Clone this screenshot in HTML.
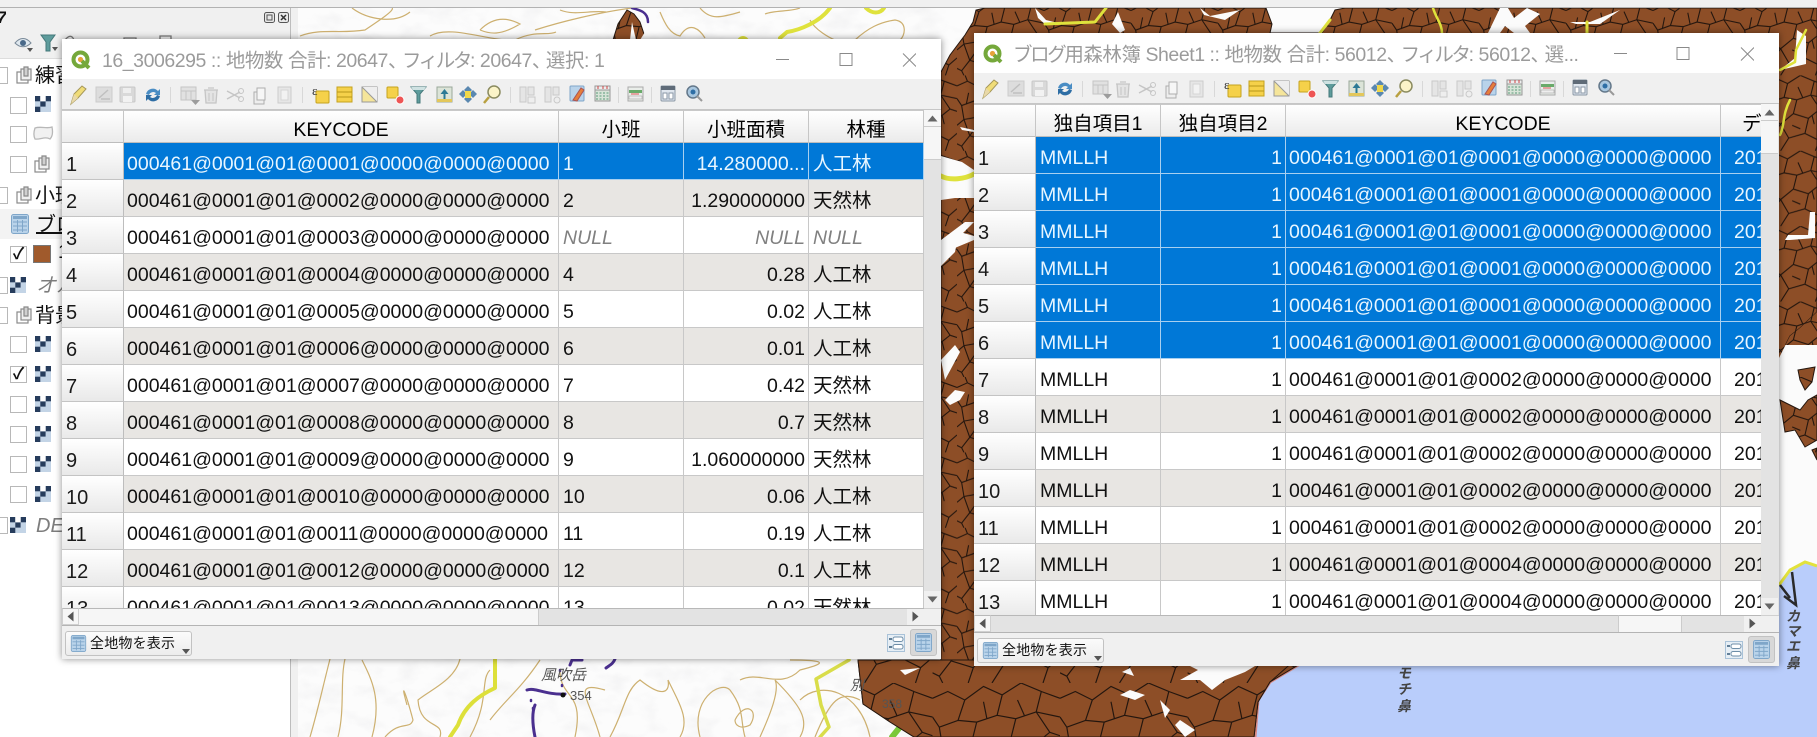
<!DOCTYPE html>
<html lang="ja"><head><meta charset="utf-8"><title>QGIS</title>
<style>
html,body{margin:0;padding:0;width:1817px;height:737px;overflow:hidden;background:#fff}
body{position:relative;font-family:"Liberation Sans","Noto Sans CJK JP",sans-serif;color:#111}
.abs,svg.abs{position:absolute;display:block}
.lbl{position:absolute;font-size:19.5px;line-height:24px;white-space:nowrap;overflow:hidden}
.win{position:absolute;background:#f0f0f0;box-sizing:border-box;box-shadow:0 0 7px rgba(0,0,0,.45);overflow:hidden}
.tt{position:absolute;left:0;top:0;right:0;height:40px;background:#fff}
.ttx{position:absolute;left:40px;top:9px;font-size:19.5px;line-height:26px;color:#9b9b9b;white-space:nowrap;letter-spacing:-.45px}
.ttx .k{letter-spacing:-2.4px}
.ttx .c{letter-spacing:-5.5px}
.tb{position:absolute;left:0;top:40px;right:0;height:31px;background:#f0f0f0}
.tv{position:absolute;left:0;top:71px;overflow:hidden;background:#e3e3e3}
table{border-collapse:separate;border-spacing:0;table-layout:fixed;font-size:19.5px}
th{font-weight:400;padding:6px 2px 0;line-height:24px;border-right:1px solid #c6c6c6;border-bottom:1px solid #bdbdbd;border-top:1px solid #c9c9c9;background:linear-gradient(#fff,#ebebeb);text-align:center;white-space:nowrap;overflow:hidden;box-sizing:border-box;height:33px;color:#000}
td{height:37px;box-sizing:border-box;padding:5px 4px 0 4px;border-right:1px solid #c8c8c8;border-bottom:1px solid #c8c8c8;white-space:nowrap;overflow:hidden;background:#fff;line-height:24px}
td.h{background:linear-gradient(#fff,#e9e9e9);padding:7px 0 0 4px;font-size:20px;line-height:24px;border-right:1px solid #bdbdbd;border-bottom:1px solid #c4c4c4;color:#1a1a1a}
tr.a td{background:#e8e6e3}
tr.a td.h{background:linear-gradient(#fff,#e9e9e9)}
tr.s td{background:#0078d7;color:#e8f6ff;border-right-color:#a8d0f0;border-bottom-color:#a8d0f0}
tr.s td.h{background:linear-gradient(#fff,#e9e9e9);color:#1a1a1a;border-right-color:#bdbdbd;border-bottom-color:#c4c4c4}
td.r{text-align:right;padding-right:3px}
td.n{font-style:italic;color:#808080}
td.d{padding-left:13px;padding-right:0;border-right:0}
.k1 td:nth-child(2),.k2 td:nth-child(4){padding-left:3px}
.vs,.hs{position:absolute;background:#e3e3e3}
.sb{position:absolute;background:#f6f6f6;box-sizing:border-box}
.bb{position:absolute;background:#f0f0f0;border-top:1px solid #b4b4b4;box-sizing:border-box;left:0;right:0}
.btn{position:absolute;left:3px;top:5px;width:127px;height:25px;border:1px solid #c2c2c2;border-radius:3px;box-sizing:border-box;background:linear-gradient(#fbfbfb,#ececec);font-size:14px;line-height:23px;white-space:nowrap}
.btn span{position:absolute;left:24px;top:0;letter-spacing:.2px;color:#111}
.ub{position:absolute;box-sizing:border-box}
.ck{position:absolute;width:17px;height:17px;box-sizing:border-box;border:1px solid #b8b8b8;background:#fff}
</style></head><body>

<svg width="0" height="0" style="position:absolute">
<defs>
<pattern id="f" width="150" height="130" patternUnits="userSpaceOnUse" patternTransform="scale(.58)">
<rect width="150" height="130" fill="#8d4e27"/>
<path d="M0 18L18 10 38 20 30 44 8 52 0 40M38 20L60 4 82 14 76 38 52 46 30 44M82 14L104 0 128 10 122 34 98 42 76 38M128 10L150 18M122 34L150 40M8 52L12 76 0 86M52 46L46 70 12 76M46 70L70 84 92 66 98 42M92 66L118 74 138 58 122 34M138 58L150 62M118 74L112 100 84 108 70 84M84 108L70 130M112 100L136 112 150 100M136 112L130 130M12 76L22 104 46 70M22 104L8 122 0 118M22 104L48 112 70 84M48 112L42 130M8 122L12 130M60 4L60 0M18 10L14 0M30 44L52 46M60 22L64 42M100 20L108 38M20 30L16 50M128 84L124 68M34 90L42 110M90 86L104 92" fill="none" stroke="#24160e" stroke-width="1.9"/>
</pattern>
<pattern id="g" width="150" height="130" patternUnits="userSpaceOnUse" patternTransform="translate(40 20) scale(.85)">
<rect width="150" height="130" fill="#8d4e27"/>
<path d="M0 18L18 10 38 20 30 44 8 52 0 40M38 20L60 4 82 14 76 38 52 46 30 44M82 14L104 0 128 10 122 34 98 42 76 38M128 10L150 18M122 34L150 40M8 52L12 76 0 86M52 46L46 70 12 76M46 70L70 84 92 66 98 42M92 66L118 74 138 58 122 34M138 58L150 62M118 74L112 100 84 108 70 84M84 108L70 130M112 100L136 112 150 100M136 112L130 130M12 76L22 104 46 70M22 104L8 122 0 118M22 104L48 112 70 84M48 112L42 130M8 122L12 130M30 44L52 46M60 22L64 42M100 20L108 38" fill="none" stroke="#24160e" stroke-width="1.4"/>
</pattern>
<filter id="hs" x="0" y="0" width="100%" height="100%"><feTurbulence type="fractalNoise" baseFrequency=".035 .06" numOctaves="3" seed="4"/><feColorMatrix values="0 0 0 0 .72  0 0 0 0 .72  0 0 0 0 .74  1.6 0 0 0 -.72"/></filter>

<g id="ras"><rect width="16" height="16" fill="#c3d4e6"/><rect width="5.3" height="5.3" fill="#263c5c"/><rect x="10.7" width="5.3" height="5.3" fill="#263c5c"/><rect x="5.3" y="5.3" width="5.3" height="5.3" fill="#263c5c"/><rect y="10.7" width="5.3" height="5.3" fill="#263c5c"/><rect x="5.3" width="5.3" height="5.3" fill="#fff"/></g>
<g id="grp" fill="#fff" stroke="#8a8a8a" stroke-width="1.2"><rect x="1" y="6" width="11" height="11"/><rect x="5" y="3" width="10" height="11" fill="#f0f0f0"/><path d="M8 1h4v9H8z" fill="#d0d0d0"/></g>
<g id="tbl"><rect x=".5" y=".5" width="17" height="19" rx="2" fill="#b9d3ea" stroke="#7fa6c9"/><rect x="2" y="2" width="14" height="3" fill="#7fa6c9"/><path d="M2 8h14M2 12h14M2 16h14M6.500 6v12M11.500 6v12" stroke="#7fa6c9" fill="none"/></g>
<g id="q"><circle cx="9.500" cy="9.500" r="7" fill="#fff" stroke="#75a83b" stroke-width="4"/><circle cx="9.500" cy="9.500" r="2.600" fill="#e6a33a"/><path d="M11 11l7 7" stroke="#75a83b" stroke-width="4"/></g>

<g id="toolbar">
<g transform="translate(7,13)"><path d="M2 19L5 9 13 1 17 4 9 13z" fill="#f0dc78" stroke="#a5975a"/><path d="M2 19l3-10 4 4z" fill="#e9d9a8"/></g>
<g transform="translate(34,15)" opacity=".55"><rect width="16" height="15" fill="#cfcfcf" stroke="#b0b0b0"/><path d="M3 11L12 3M5 12h9" stroke="#999" stroke-width="1.500"/></g>
<g transform="translate(58,15)" opacity=".55"><rect width="15" height="15" rx="1" fill="#c8c8c8" stroke="#a8a8a8"/><rect x="3" y="1" width="8" height="5" fill="#eee"/><rect x="3" y="9" width="9" height="6" fill="#f5f5f5"/></g>
<g transform="translate(83,15)"><path d="M1 7a7 7 0 0 1 12-3l2-2v6H9l2-2a4.500 4.500 0 0 0-7 2z" fill="#4a8dc4"/><path d="M15 9a7 7 0 0 1-12 3l-2 2V8h6l-2 2a4.500 4.500 0 0 0 7-2z" fill="#2e6ea5"/></g>
<rect x="108" y="15" width="1" height="16" fill="#d8d8d8"/>
<g transform="translate(119,15)" opacity=".6"><rect width="15" height="13" fill="#d8d8d8" stroke="#aaa"/><path d="M0 4h15M5 4v9M10 4v9" stroke="#aaa"/><path d="M10 13h9l-4.500 5z" fill="#666"/></g>
<g transform="translate(141,15)" opacity=".6"><path d="M2 3h12l-1 13H3zM1 3h14M5 1h6" fill="#ddd" stroke="#aaa" stroke-width="1.300"/><path d="M6 6v8M10 6v8" stroke="#aaa"/></g>
<g transform="translate(165,17)" opacity=".6"><path d="M0 2l13 7M0 10L13 3" stroke="#aaa" stroke-width="1.500"/><circle cx="14" cy="2" r="2.500" fill="none" stroke="#aaa"/><circle cx="14" cy="10" r="2.500" fill="none" stroke="#aaa"/></g>
<g transform="translate(192,15)" opacity=".75"><rect x="0" y="5" width="10" height="12" fill="#eee" stroke="#999"/><rect x="3" y="1" width="8" height="12" fill="#f8f8f8" stroke="#999"/></g>
<g transform="translate(216,15)" opacity=".5"><rect width="13" height="16" fill="#ddd" stroke="#aaa"/><rect x="3" y="3" width="7" height="10" fill="#f5f5f5" stroke="#bbb"/></g>
<rect x="240" y="15" width="1" height="16" fill="#d8d8d8"/>
<g transform="translate(250,13)"><rect x="4" y="6" width="13" height="12" rx="1" fill="#f5d14a" stroke="#c5a21e"/><text x="0" y="10" font-size="13" font-family="Liberation Serif,serif" fill="#333">ε</text></g>
<g transform="translate(275,15)"><rect width="15" height="15" fill="#f5d14a" stroke="#c5a21e"/><path d="M0 5h15M0 10h15" stroke="#b8961a"/></g>
<g transform="translate(300,15)"><rect width="15" height="15" fill="#f5e59a" stroke="#999"/><path d="M0 0L15 15V0z" fill="#eee"/><path d="M0 0L15 15" stroke="#999"/></g>
<g transform="translate(325,15)"><rect width="11" height="11" rx="1" fill="#f5d14a" stroke="#c5a21e"/><circle cx="13" cy="13" r="4" fill="#e55" stroke="#fff"/></g>
<g transform="translate(349,14)"><path d="M0 1h15L9 8v9H6V8z" fill="#5e9c9c" stroke="#44787a"/><path d="M0 1h15l-2 3H2z" fill="#cfe2e2"/></g>
<g transform="translate(375,15)"><rect width="15" height="15" fill="#dce4d8" stroke="#9aa89a"/><path d="M7.500 2l4 5h-8z" fill="#2c7a95"/><path d="M7.500 6v6" stroke="#2c7a95" stroke-width="2"/><rect y="12" width="15" height="3" fill="#e3c75b"/></g>
<g transform="translate(398,14)"><path d="M8 0l4 4-4 4-4-4zM8 9l4 4-4 4-4-4zM3 4l4 4-4 4-4-4zM13 4l4 4-4 4-4-4z" fill="#5a88b0"/><rect x="5" y="5" width="6" height="7" fill="#f0d84a"/></g>
<g transform="translate(421,13)"><circle cx="11" cy="7" r="6" fill="#fbf4c8" stroke="#8b8b60" stroke-width="1.500"/><path d="M6 12L1 18" stroke="#b8a040" stroke-width="2.500"/></g>
<rect x="448" y="15" width="1" height="16" fill="#d8d8d8"/>
<g transform="translate(458,15)" opacity=".55"><path d="M0 0h6v15H0zM8 0h6v8H8z" fill="#ddd" stroke="#aaa"/><rect x="8" y="10" width="7" height="6" fill="#eee" stroke="#aaa"/></g>
<g transform="translate(483,15)" opacity=".55"><path d="M0 0h6v15H0zM8 0h6v8H8z" fill="#ddd" stroke="#aaa"/><circle cx="12" cy="13" r="3" fill="#eee" stroke="#aaa"/></g>
<g transform="translate(508,14)"><rect width="14" height="15" rx="1" fill="#b9d3ea" stroke="#7fa6c9"/><path d="M3 14L11 2l3 2-7 11z" fill="#e67e3a" stroke="#a55"/></g>
<g transform="translate(533,14)"><rect width="15" height="15" fill="#d8e4d8" stroke="#999"/><rect width="15" height="4" fill="#eee" stroke="#999"/><path d="M1 7h13M1 10h13M1 13h13" stroke="#5a9a7a" stroke-dasharray="2 1.500"/><path d="M3 0v3M8 0v3M12 0v3" stroke="#c44"/></g>
<rect x="556" y="15" width="1" height="16" fill="#d8d8d8"/>
<g transform="translate(566,15)"><rect width="15" height="14" fill="#eaeeea" stroke="#aaa"/><rect x="1" y="3" width="13" height="3" fill="#6aaa6a"/><rect x="1" y="9" width="13" height="3" fill="#eee" stroke="#999" stroke-width=".5"/><path d="M3 7h8" stroke="#d55"/></g>
<rect x="589" y="15" width="1" height="16" fill="#d8d8d8"/>
<g transform="translate(599,14)"><rect width="14" height="15" rx="1" fill="#dfe6ee" stroke="#8a97a5"/><rect width="14" height="4" fill="#5f6b78"/><rect x="2" y="7" width="4" height="6" fill="#fff" stroke="#8a97a5"/><rect x="8" y="7" width="4" height="6" fill="#fff" stroke="#8a97a5"/></g>
<g transform="translate(624,13)"><circle cx="7" cy="7" r="6" fill="#a9c7df" stroke="#64788a" stroke-width="1.500"/><circle cx="7" cy="7" r="2.500" fill="#2e6ea5"/><path d="M11 11l5 5" stroke="#999" stroke-width="2"/></g>
</g>
</defs>
</svg>

<!-- app background -->
<div class="abs" style="left:0;top:0;width:1817px;height:7px;background:#f0f0f0"></div>
<div class="abs" style="left:0;top:7px;width:1817px;height:1px;background:#b2b2b2"></div>

<!-- MAP -->
<svg class="abs" style="left:298px;top:8px" width="1519" height="729" viewBox="298 8 1519 729">
<rect x="298" y="8" width="1519" height="729" fill="#fcfcfc"/>
<rect x="298" y="8" width="700" height="729" filter="url(#hs)" opacity=".4"/>
<g fill="none" stroke="#cdb070" stroke-width="1.200">
<path d="M300 36C320 28 340 34 365 30 380 20 395 10 392 8M352 8C368 20 395 24 410 12M430 36C450 24 490 42 515 40 535 30 548 36 556 32M480 30C492 18 505 16 520 24 500 36 490 34 480 30M632 8C600 12 560 22 535 30M660 12C665 24 670 34 680 36 690 20 700 30 705 38M560 10C575 16 590 10 606 12M700 8C710 20 720 18 740 12M765 14C775 10 790 12 800 8M855 40C868 28 880 22 895 20 908 22 905 36 900 40M810 20C815 30 830 38 835 40"/>
<path d="M310 737C318 710 322 690 330 659M338 737C345 710 340 680 345 659M372 737C382 700 372 680 362 660M385 737C400 720 410 730 413 720 405 690 400 680 407 705M440 737C445 720 420 730 418 700 430 690 455 680 460 659M470 737C490 700 480 680 490 670M490 720C505 700 520 690 540 660M575 737C585 690 560 700 560 670M600 737C590 700 570 680 605 690M610 737C625 710 625 690 640 680 665 700 670 690 668 680 680 705 690 720 680 737M700 737C690 700 720 680 730 690 745 710 740 720 745 737M760 737C770 715 780 690 775 680 800 705 810 720 800 737M740 680C760 670 780 690 800 670 820 665 835 660 790 660M735 720C745 700 760 710 750 725 740 730 735 725 735 720M800 700C820 680 860 690 870 737M815 737C830 700 840 690 860 700"/>
</g>
<g fill="none" stroke-linecap="round" stroke-linejoin="round">
<path d="M830 8C820 22 800 30 787 32L780 38" stroke="#dfe23c" stroke-width="4"/>
<path d="M866 8C872 14 880 14 884 8" stroke="#dfe23c" stroke-width="4"/>
<circle cx="743" cy="42" r="6" fill="#dfe23c"/>
<path d="M495 659V688C480 695 465 705 458 725L450 737" stroke="#dde03a" stroke-width="4"/>
<path d="M849 660L816 679 821 705 829 727 820 737" stroke="#d9dd4a" stroke-width="3.500"/>
<path d="M915 716L900 727 892 737" stroke="#7ac83a" stroke-width="6"/>
<path d="M632 8C640 10 648 12 648 22" stroke="#4a2f8f" stroke-width="2.500"/>
<path d="M527 690C535 687 545 695 565 694" stroke="#4a2f8f" stroke-width="3"/>
<path d="M535 737C532 722 532 712 535 705" stroke="#4a2f8f" stroke-width="3"/>
<path d="M570 665L572 660 582 660M606 668C610 665 613 664 615 659" stroke="#4a2f8f" stroke-width="3"/>
<path d="M531 700v1M533 708v1M560 670v1M562 685v1" stroke="#4a2f8f" stroke-width="2.500"/>
</g>
<path d="M1255 737L1258 700 1270 682 1300 664 1779 585 1790 570 1805 562 1817 566V737z" fill="#b9cdfb"/>
<path d="M1255 737L1258 700 1270 682 1300 664" fill="none" stroke="#d88a84" stroke-width="3"/>
<path d="M1779 585L1790 570 1805 562 1817 566" fill="none" stroke="#e2e23c" stroke-width="3"/>
<path d="M1780 585L1790 598M1792 572L1796 605 1784 596" fill="none" stroke="#2a2a2a" stroke-width="2.500"/>
<path fill="url(#f)" stroke="#24160e" d="M613 40L618 24 627 10 634 14 640 22 646 40z"/>
<path fill="url(#f)" stroke="#24160e" d="M941 72L950 55 965 35 973 22 976 10 985 8H1266L1272 24 1270 33H1322L1330 20 1335 10 1345 8H1817V312L1800 328 1790 336 1779 358 1700 600 1300 664 1270 682 1258 702 1254 737H914L890 722 863 704 858 660H941z"/>
<path fill="url(#g)" stroke="#24160e" d="M858 660H1295L1270 682 1258 702 1254 737H914L890 722 863 704z"/>
<g fill="#fbfbfb">
<path d="M648 40L650 24 640 40zM630 40L632 22 636 40z"/>
<path d="M941 156L962 162 974 170 974 178 941 178zM941 178H974V198L955 198 941 200z"/>
<path d="M974 222L958 238 955 252 941 266 941 240 965 222z"/>
<path d="M974 236L960 232 950 250 974 240z"/>
<path d="M960 127L974 130 974 132 962 130z"/>
<path d="M1035 8L1046 20 1062 24 1046 25 1038 18zM1118 12L1125 30 1120 33 1112 24zM1200 8L1210 16 1240 10 1225 20 1204 15z"/>
<path d="M1488 33L1500 8 1508 8 1514 18 1527 8 1540 14 1525 26 1530 33 1514 33 1505 26 1500 33zM1570 22L1590 22 1620 10 1600 24 1576 24z"/>
<path d="M1797 30L1806 36 1806 64 1780 70 1795 58z"/>
<path d="M1785 240L1788 235 1808 235 1810 212 1815 212V238L1790 240z"/>
<path d="M1200 680L1212 690 1225 680 1245 672 1255 666H1190L1198 670 1180 680z"/>
<path d="M1122 672L1134 676 1130 668zM1120 695L1135 700 1145 695 1130 690zM1160 700L1170 710 1165 718zM1180 720L1195 730 1185 737 1175 725z"/>
<path d="M900 670L920 668 905 675z"/>
<path d="M941 360L955 345 960 352 945 380zM945 400L955 390 965 392 960 400 950 405z"/>
</g>
<g fill="none" stroke-linecap="round" stroke-linejoin="round" stroke="#dfe23c">
<path d="M1106 8L1095 22 1045 24" stroke-width="3"/>
<path d="M1330 20L1320 33" stroke-width="3"/>
<path d="M1433 8C1436 18 1442 24 1442 33" stroke-width="2.500"/>
<path d="M1587 22V33" stroke-width="3"/>
<path d="M1806 30L1796 50 1795 62 1780 70" stroke-width="2.500"/>
<path d="M1790 100C1782 115 1785 125 1780 135" stroke-width="2.500"/>
<path d="M941 176C950 181 965 179 974 174" stroke-width="5"/>
</g>
<path d="M1779 345H1817V560H1779z" fill="#fbfbfb"/>
<path d="M1779 358L1790 336 1800 328 1817 312V345H1779z" fill="url(#f)"/>
<g fill="url(#f)" stroke="#24160e">
<path d="M1798 370L1815 367 1812 382 1805 390 1800 380z"/>
<path d="M1780 400L1790 405 1800 410 1808 400 1817 395V440L1805 447 1795 430 1785 432z"/>
<path d="M1812 450L1817 448V460z"/>
</g>
<g font-family="'Liberation Sans','Noto Sans CJK JP',sans-serif" fill="#555">
<text x="541" y="680" font-size="15" font-style="italic">風吹岳</text>
<circle cx="563" cy="695" r="2.500" fill="#111"/>
<text x="570" y="700" font-size="13">354</text>
<text x="850" y="690" font-size="14" font-style="italic">別</text>
<text x="882" y="708" font-size="12">358</text>
</g>
<g font-family="'Liberation Sans','Noto Sans CJK JP',sans-serif" fill="#444" font-style="italic" font-size="14" font-weight="700">
<text x="1397" y="678">モ</text><text x="1397" y="694">チ</text><text x="1397" y="711">鼻</text>
<text x="1786" y="621">カ</text><text x="1786" y="636">マ</text><text x="1786" y="651">エ</text><text x="1786" y="668">鼻</text>
</g>
</svg>

<!-- LEFT PANEL -->
<div class="abs" style="left:0;top:8px;width:290px;height:729px;background:#fff"></div>
<div class="abs" style="left:0;top:8px;width:290px;height:50px;background:#f0f0f0;border-bottom:1px solid #ddd"></div>
<div class="abs" style="left:290px;top:8px;width:8px;height:729px;background:#f0f0f0;border-left:1px solid #bdbdbd;box-sizing:border-box"></div>
<div class="lbl" style="left:-3px;top:6px;font-style:italic;font-weight:700;font-size:17px">7</div>
<svg class="abs" style="left:264px;top:12px" width="26" height="12"><rect x=".5" y=".5" width="10" height="10" rx="2" fill="#e8e8e8" stroke="#555"/><rect x="3" y="3" width="5" height="5" fill="none" stroke="#555"/><rect x="14.500" y=".5" width="10" height="10" rx="2" fill="#e8e8e8" stroke="#555"/><path d="M17 3l5 5M22 3l-5 5" stroke="#333" stroke-width="1.500"/></svg>
<svg class="abs" style="left:14px;top:33px" width="160" height="25">
<path d="M1 10C6 4 12 4 17 10 12 15 6 15 1 10z" fill="#dfe8ef" stroke="#7a8a99"/><circle cx="9" cy="10" r="3" fill="#4a6a8a"/><path d="M13 15h6l-3 4z" fill="#555"/>
<path d="M27 2h14l-5 7v9h-4V9z" fill="#5e9c9c" stroke="#44787a"/><path d="M38 14h6l-3 4z" fill="#555"/>
<path d="M51 7C55 2 58 2 60 7M110 5h12v5h-12zM146 3h11v6h-11z" fill="none" stroke="#777" stroke-width="1.300"/>
</svg>
<div class="ck" style="left:-9px;top:67px"></div>
<svg class="abs" style="left:16px;top:66px" width="16" height="18"><use href="#grp"/></svg>
<div class="lbl" style="left:35px;top:64px;width:27px;font-size:20px">練習</div>
<div class="ck" style="left:10px;top:97px"></div>
<svg class="abs" style="left:35px;top:96px" width="17" height="17"><use href="#ras"/></svg>
<div class="ck" style="left:10px;top:126px"></div>
<svg class="abs" style="left:33px;top:126px" width="21" height="15"><path d="M2 2C8 0 14 3 19 1 20 6 20 10 17 13 12 10 7 14 2 13 0 9 1 5 2 2z" fill="#f1f1f1" stroke="#b8b8b8" stroke-width="1.300"/></svg>
<div class="ck" style="left:10px;top:156px"></div>
<svg class="abs" style="left:34px;top:155px" width="16" height="18"><use href="#grp"/></svg>
<div class="ck" style="left:-9px;top:187px"></div>
<svg class="abs" style="left:16px;top:186px" width="16" height="18"><use href="#grp"/></svg>
<div class="lbl" style="left:35px;top:184px;width:27px;font-size:20px">小班</div>
<div class="abs" style="left:0;top:209px;width:62px;height:30px;background:#f3f3f3"></div>
<svg class="abs" style="left:11px;top:214px" width="18" height="20"><use href="#tbl"/></svg>
<div class="lbl" style="left:36px;top:213px;width:26px;font-size:20px;text-decoration:underline">ブロ</div>
<div class="ck" style="left:10px;top:246px;font-size:16px;line-height:15px;font-weight:700;text-align:center;color:#111">✓</div>
<div class="abs" style="left:33px;top:245px;width:18px;height:18px;background:#a05a2c;border:1px solid #777;box-sizing:border-box"></div>
<div class="lbl" style="left:58px;top:240px;width:4px">1</div>
<div class="ck" style="left:-9px;top:277px"></div>
<svg class="abs" style="left:10px;top:277px" width="17" height="17"><use href="#ras"/></svg>
<div class="lbl" style="left:36px;top:274px;width:26px;font-style:italic;color:#7d7d7d;font-size:20px">オル</div>
<div class="ck" style="left:-9px;top:307px"></div>
<svg class="abs" style="left:16px;top:306px" width="16" height="18"><use href="#grp"/></svg>
<div class="lbl" style="left:35px;top:304px;width:27px;font-size:20px">背景</div>
<div class="ck" style="left:10px;top:336px"></div><svg class="abs" style="left:35px;top:336px" width="17" height="17"><use href="#ras"/></svg>
<div class="ck" style="left:10px;top:366px;font-size:16px;line-height:15px;font-weight:700;text-align:center;color:#111">✓</div><svg class="abs" style="left:35px;top:366px" width="17" height="17"><use href="#ras"/></svg>
<div class="ck" style="left:10px;top:396px"></div><svg class="abs" style="left:35px;top:396px" width="17" height="17"><use href="#ras"/></svg>
<div class="ck" style="left:10px;top:426px"></div><svg class="abs" style="left:35px;top:426px" width="17" height="17"><use href="#ras"/></svg>
<div class="ck" style="left:10px;top:456px"></div><svg class="abs" style="left:35px;top:456px" width="17" height="17"><use href="#ras"/></svg>
<div class="ck" style="left:10px;top:486px"></div><svg class="abs" style="left:35px;top:486px" width="17" height="17"><use href="#ras"/></svg>
<div class="ck" style="left:-9px;top:517px"></div>
<svg class="abs" style="left:10px;top:517px" width="17" height="17"><use href="#ras"/></svg>
<div class="lbl" style="left:36px;top:514px;width:26px;font-style:italic;color:#7d7d7d;font-size:20px">DEM</div>

<!-- WINDOW 1 -->
<div class="win" style="left:62px;top:39px;width:879px;height:620px">
<div class="tt"></div>
<svg class="abs" style="left:9px;top:11px" width="21" height="21"><use href="#q"/></svg>
<div class="ttx">16_3006295 :: 地物数 合計: 20647<span class="c">、</span><span class="k">フィルタ</span>: 20647<span class="c">、</span>選択: 1</div>
<svg class="abs" style="left:714px;top:14px" width="140" height="14"><path d="M0 6.500H13M64 .5h12v12H64zM127 .5l13 13M140 .5l-13 13" fill="none" stroke="#8a8a8a"/></svg>
<div class="tb"></div>
<svg class="abs" style="left:0;top:40px" width="720" height="31" viewBox="0 7 720 31"><use href="#toolbar"/></svg>
<div class="abs" style="left:0;top:70px;width:879px;height:1px;background:#c6c6c6"></div>
<div class="tv" style="width:862px;height:498px">
<table class="k1" style="width:862px"><colgroup><col style="width:62px"><col style="width:435px"><col style="width:125px"><col style="width:125px"><col style="width:115px"></colgroup>
<tr><th></th><th>KEYCODE</th><th>小班</th><th>小班面積</th><th>林種</th></tr>
<tr class="s"><td class="h">1</td><td>000461@0001@01@0001@0000@0000@0000</td><td>1</td><td class="r">14.280000...</td><td>人工林</td></tr>
<tr class="a"><td class="h">2</td><td>000461@0001@01@0002@0000@0000@0000</td><td>2</td><td class="r">1.290000000</td><td>天然林</td></tr>
<tr><td class="h">3</td><td>000461@0001@01@0003@0000@0000@0000</td><td class="n">NULL</td><td class="r n">NULL</td><td class="n">NULL</td></tr>
<tr class="a"><td class="h">4</td><td>000461@0001@01@0004@0000@0000@0000</td><td>4</td><td class="r">0.28</td><td>人工林</td></tr>
<tr><td class="h">5</td><td>000461@0001@01@0005@0000@0000@0000</td><td>5</td><td class="r">0.02</td><td>人工林</td></tr>
<tr class="a"><td class="h">6</td><td>000461@0001@01@0006@0000@0000@0000</td><td>6</td><td class="r">0.01</td><td>人工林</td></tr>
<tr><td class="h">7</td><td>000461@0001@01@0007@0000@0000@0000</td><td>7</td><td class="r">0.42</td><td>天然林</td></tr>
<tr class="a"><td class="h">8</td><td>000461@0001@01@0008@0000@0000@0000</td><td>8</td><td class="r">0.7</td><td>天然林</td></tr>
<tr><td class="h">9</td><td>000461@0001@01@0009@0000@0000@0000</td><td>9</td><td class="r">1.060000000</td><td>天然林</td></tr>
<tr class="a"><td class="h">10</td><td>000461@0001@01@0010@0000@0000@0000</td><td>10</td><td class="r">0.06</td><td>人工林</td></tr>
<tr><td class="h">11</td><td>000461@0001@01@0011@0000@0000@0000</td><td>11</td><td class="r">0.19</td><td>人工林</td></tr>
<tr class="a"><td class="h">12</td><td>000461@0001@01@0012@0000@0000@0000</td><td>12</td><td class="r">0.1</td><td>人工林</td></tr>
<tr><td class="h">13</td><td>000461@0001@01@0013@0000@0000@0000</td><td>13</td><td class="r">0.02</td><td>天然林</td></tr>
</table></div>
<div class="vs" style="left:862px;top:71px;width:17px;height:498px"></div>
<div class="sb" style="left:862px;top:71px;width:17px;height:17px;border-bottom:1px solid #ccc"></div>
<svg class="abs" style="left:865px;top:76px" width="11" height="7"><path d="M.5 6.500L5.500 .5 10.500 6.500z" fill="#666"/></svg>
<div class="sb" style="left:862px;top:88px;width:17px;height:33px;border-bottom:1px solid #ccc"></div>
<div class="sb" style="left:862px;top:552px;width:17px;height:17px;background:#f0f0f0"></div>
<svg class="abs" style="left:865px;top:557px" width="11" height="7"><path d="M.5 .5L5.500 6.500 10.500 .5z" fill="#666"/></svg>
<div class="hs" style="left:0;top:569px;width:862px;height:17px;border-top:1px solid #b8b8b8;box-sizing:border-box"></div>
<div class="sb" style="left:0;top:569px;width:17px;height:17px;border:1px solid #d0d0d0;border-top-color:#b8b8b8"></div>
<svg class="abs" style="left:5px;top:572px" width="7" height="11"><path d="M6.500 .5L.5 5.500 6.500 10.500z" fill="#555"/></svg>
<div class="sb" style="left:17px;top:569px;width:460px;height:17px;border-top:1px solid #b8b8b8;border-right:1px solid #ccc"></div>
<div class="sb" style="left:845px;top:569px;width:17px;height:17px;background:#f0f0f0;border-top:1px solid #b8b8b8"></div>
<svg class="abs" style="left:850px;top:572px" width="7" height="11"><path d="M.5 .5L6.500 5.500 .5 10.500z" fill="#555"/></svg>
<div class="sb" style="left:862px;top:569px;width:17px;height:17px;background:#f0f0f0;border-top:1px solid #d0d0d0"></div>
<div class="bb" style="top:586px;height:34px">
<div class="btn"><svg class="abs" style="left:4px;top:3px" width="17" height="17" viewBox="0 0 18 20"><use href="#tbl"/></svg><span>全地物を表示</span><svg class="abs" style="left:116px;top:17px" width="9" height="5"><path d="M0 0h8L4 5z" fill="#555"/></svg></div>
<svg class="abs" style="left:825px;top:8px" width="18" height="18"><rect x=".5" y=".5" width="17" height="17" fill="#e6eef5" stroke="#a9c2d8"/><rect x="6" y="3" width="10" height="4.500" rx="2" fill="#fff" stroke="#6e8ea8"/><rect x="6" y="10.500" width="10" height="4.500" rx="2" fill="#fff" stroke="#6e8ea8"/><path d="M2 5h3M2 13h3" stroke="#365a78" stroke-width="1.500"/></svg>
<div class="ub" style="left:848px;top:3px;width:27px;height:27px;background:#d8d8d8;border:1px solid #c2c2c2;border-radius:3px"></div>
<svg class="abs" style="left:853px;top:7px" width="17" height="19" viewBox="0 0 18 20"><use href="#tbl"/></svg>
</div>
</div>

<!-- WINDOW 2 -->
<div class="win" style="left:974px;top:33px;width:805px;height:633px">
<div class="tt"></div>
<svg class="abs" style="left:9px;top:11px" width="21" height="21"><use href="#q"/></svg>
<div class="ttx" style="left:39px"><span class="k">ブログ</span>用森林簿 Sheet1 :: 地物数 合計: 56012<span class="c">、</span><span class="k">フィルタ</span>: 56012<span class="c">、</span>選...</div>
<svg class="abs" style="left:640px;top:14px" width="140" height="14"><path d="M0 6.500H13M63 .5h12v12H63zM127 .5l13 13M140 .5l-13 13" fill="none" stroke="#8a8a8a"/></svg>
<div class="tb"></div>
<svg class="abs" style="left:0;top:40px" width="720" height="31" viewBox="0 7 720 31"><use href="#toolbar"/></svg>
<div class="abs" style="left:0;top:70px;width:805px;height:1px;background:#c6c6c6"></div>
<div class="tv" style="width:787px;height:511px">
<table class="k2" style="width:787px"><colgroup><col style="width:62px"><col style="width:125px"><col style="width:125px"><col style="width:435px"><col style="width:40px"></colgroup>
<tr><th></th><th>独自項目1</th><th>独自項目2</th><th>KEYCODE</th><th style="text-align:left;padding-left:21px;border-right:0">データ</th></tr>
<tr class="s"><td class="h">1</td><td>MMLLH</td><td class="r">1</td><td>000461@0001@01@0001@0000@0000@0000</td><td class="d">2018</td></tr>
<tr class="s"><td class="h">2</td><td>MMLLH</td><td class="r">1</td><td>000461@0001@01@0001@0000@0000@0000</td><td class="d">2018</td></tr>
<tr class="s"><td class="h">3</td><td>MMLLH</td><td class="r">1</td><td>000461@0001@01@0001@0000@0000@0000</td><td class="d">2018</td></tr>
<tr class="s"><td class="h">4</td><td>MMLLH</td><td class="r">1</td><td>000461@0001@01@0001@0000@0000@0000</td><td class="d">2018</td></tr>
<tr class="s"><td class="h">5</td><td>MMLLH</td><td class="r">1</td><td>000461@0001@01@0001@0000@0000@0000</td><td class="d">2018</td></tr>
<tr class="s"><td class="h">6</td><td>MMLLH</td><td class="r">1</td><td>000461@0001@01@0001@0000@0000@0000</td><td class="d">2018</td></tr>
<tr><td class="h">7</td><td>MMLLH</td><td class="r">1</td><td>000461@0001@01@0002@0000@0000@0000</td><td class="d">2018</td></tr>
<tr class="a"><td class="h">8</td><td>MMLLH</td><td class="r">1</td><td>000461@0001@01@0002@0000@0000@0000</td><td class="d">2018</td></tr>
<tr><td class="h">9</td><td>MMLLH</td><td class="r">1</td><td>000461@0001@01@0002@0000@0000@0000</td><td class="d">2018</td></tr>
<tr class="a"><td class="h">10</td><td>MMLLH</td><td class="r">1</td><td>000461@0001@01@0002@0000@0000@0000</td><td class="d">2018</td></tr>
<tr><td class="h">11</td><td>MMLLH</td><td class="r">1</td><td>000461@0001@01@0002@0000@0000@0000</td><td class="d">2018</td></tr>
<tr class="a"><td class="h">12</td><td>MMLLH</td><td class="r">1</td><td>000461@0001@01@0004@0000@0000@0000</td><td class="d">2018</td></tr>
<tr><td class="h">13</td><td>MMLLH</td><td class="r">1</td><td>000461@0001@01@0004@0000@0000@0000</td><td class="d">2018</td></tr>
</table></div>
<div class="vs" style="left:787px;top:71px;width:18px;height:511px"></div>
<div class="sb" style="left:787px;top:71px;width:17px;height:17px;border-bottom:1px solid #ccc"></div>
<svg class="abs" style="left:790px;top:76px" width="11" height="7"><path d="M.5 6.500L5.500 .5 10.500 6.500z" fill="#666"/></svg>
<div class="sb" style="left:787px;top:88px;width:17px;height:33px;border-bottom:1px solid #ccc"></div>
<div class="sb" style="left:787px;top:565px;width:17px;height:17px;background:#f0f0f0"></div>
<svg class="abs" style="left:790px;top:570px" width="11" height="7"><path d="M.5 .5L5.500 6.500 10.500 .5z" fill="#666"/></svg>
<div class="hs" style="left:0;top:582px;width:787px;height:17px;border-top:1px solid #b8b8b8;box-sizing:border-box"></div>
<div class="sb" style="left:0;top:582px;width:17px;height:17px;border:1px solid #d0d0d0;border-top-color:#b8b8b8"></div>
<svg class="abs" style="left:5px;top:585px" width="7" height="11"><path d="M6.500 .5L.5 5.500 6.500 10.500z" fill="#555"/></svg>
<div class="sb" style="left:644px;top:582px;width:64px;height:17px;border-top:1px solid #b8b8b8;border-left:1px solid #ccc;border-right:1px solid #ccc"></div>
<div class="sb" style="left:770px;top:582px;width:17px;height:17px;background:#f0f0f0;border-top:1px solid #b8b8b8"></div>
<svg class="abs" style="left:775px;top:585px" width="7" height="11"><path d="M.5 .5L6.500 5.500 .5 10.500z" fill="#555"/></svg>
<div class="sb" style="left:787px;top:582px;width:18px;height:17px;background:#f0f0f0;border-top:1px solid #d0d0d0"></div>
<div class="bb" style="top:599px;height:34px">
<div class="btn"><svg class="abs" style="left:4px;top:3px" width="17" height="17" viewBox="0 0 18 20"><use href="#tbl"/></svg><span>全地物を表示</span><svg class="abs" style="left:116px;top:17px" width="9" height="5"><path d="M0 0h8L4 5z" fill="#555"/></svg></div>
<svg class="abs" style="left:751px;top:8px" width="18" height="18"><rect x=".5" y=".5" width="17" height="17" fill="#e6eef5" stroke="#a9c2d8"/><rect x="6" y="3" width="10" height="4.500" rx="2" fill="#fff" stroke="#6e8ea8"/><rect x="6" y="10.500" width="10" height="4.500" rx="2" fill="#fff" stroke="#6e8ea8"/><path d="M2 5h3M2 13h3" stroke="#365a78" stroke-width="1.500"/></svg>
<div class="ub" style="left:774px;top:3px;width:27px;height:27px;background:#d8d8d8;border:1px solid #c2c2c2;border-radius:3px"></div>
<svg class="abs" style="left:779px;top:7px" width="17" height="19" viewBox="0 0 18 20"><use href="#tbl"/></svg>
</div>
</div>
</body></html>
